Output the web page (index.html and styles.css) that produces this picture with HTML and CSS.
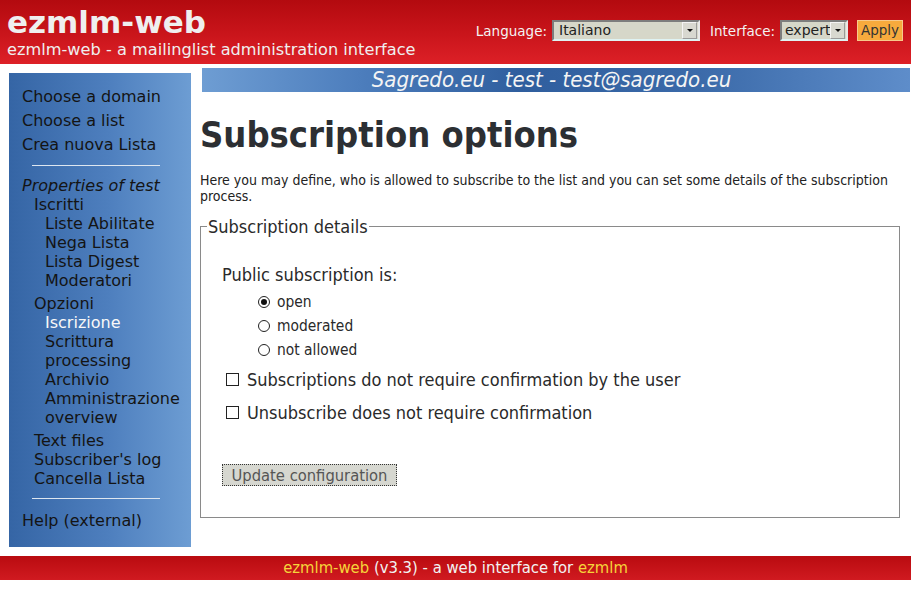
FILE: index.html
```html
<!DOCTYPE html>
<html lang="it">
<head>
<meta charset="utf-8">
<title>ezmlm-web</title>
<link rel="stylesheet" href="styles.css">
</head>
<body>
<header class="top">
  <div class="brand">
    <div class="brand-title">ezmlm-web</div>
    <div class="brand-sub">ezmlm-web - a mailinglist administration interface</div>
  </div>
  <form class="prefs">
    <label class="pref-label">Language:</label>
    <span class="select select-lang"><span class="select-text">Italiano</span><span class="select-arrow"></span></span>
    <label class="pref-label">Interface:</label>
    <span class="select select-iface"><span class="select-text">expert</span><span class="select-arrow"></span></span>
    <button type="button" class="apply">Apply</button>
  </form>
</header>

<div class="layout">
  <nav class="sidebar">
    <ul class="nav-main">
      <li>Choose a domain</li>
      <li>Choose a list</li>
      <li>Crea nuova Lista</li>
    </ul>
    <hr class="sep">
    <div class="props-title">Properties of test</div>
    <ul class="lvl1">
      <li class="group">Iscritti
        <ul class="lvl2">
          <li>Liste Abilitate</li>
          <li>Nega Lista</li>
          <li>Lista Digest</li>
          <li>Moderatori</li>
        </ul>
      </li>
      <li class="group">Opzioni
        <ul class="lvl2">
          <li class="current">Iscrizione</li>
          <li>Scrittura</li>
          <li>processing</li>
          <li>Archivio</li>
          <li>Amministrazione</li>
          <li>overview</li>
        </ul>
      </li>
      <li>Text files</li>
      <li>Subscriber's log</li>
      <li>Cancella Lista</li>
    </ul>
    <hr class="sep sep2">
    <ul class="nav-main">
      <li>Help (external)</li>
    </ul>
  </nav>

  <main class="content">
    <div class="listbar">Sagredo.eu - test - test@sagredo.eu</div>
    <h1 class="page-title">Subscription options</h1>
    <p class="intro">Here you may define, who is allowed to subscribe to the list and you can set some details of the subscription process.</p>

    <fieldset class="details">
      <legend>Subscription details</legend>
      <div class="q">Public subscription is:</div>
      <ul class="radios">
        <li><span class="radio checked"></span>open</li>
        <li><span class="radio"></span>moderated</li>
        <li><span class="radio"></span>not allowed</li>
      </ul>
      <div class="check first"><span class="box"></span>Subscriptions do not require confirmation by the user</div>
      <div class="check"><span class="box"></span>Unsubscribe does not require confirmation</div>
      <button type="button" class="update">Update configuration</button>
    </fieldset>
  </main>
</div>

<footer class="bottom">
  <span class="hl">ezmlm-web</span> (v3.3) - a web interface for <span class="hl">ezmlm</span>
</footer>
</body>
</html>
```

FILE: styles.css
```css
html, body {
  margin: 0;
  padding: 0;
  background: #ffffff;
}
body {
  font-family: "DejaVu Sans", "Liberation Sans", sans-serif;
  color: #222;
  width: 911px;
}

/* header */
.top {
  height: 64px;
  background: linear-gradient(to bottom, #b30a0f 0%, #c8141a 50%, #dd2027 100%);
  display: flex;
  justify-content: space-between;
  align-items: flex-start;
}
.brand {
  padding: 4px 0 0 7px;
  color: #efefef;
}
.brand-title {
  font-weight: bold;
  font-size: 31px;
  line-height: 36px;
}
.brand-sub {
  font-size: 16.2px;
  line-height: 19px;
  margin-top: 0;
}
.prefs {
  display: flex;
  align-items: center;
  margin: 20px 8px 0 0;
  font-size: 14px;
}
.pref-label {
  color: #f3f3f3;
  margin-right: 5px;
  font-size: 13.5px;
}
.select {
  display: flex;
  align-items: center;
  height: 21px;
  box-sizing: border-box;
  background: #d6d7c9;
  border: 2px solid #7d7d7d;
  border-right-color: #e8e8e8;
  border-bottom-color: #dff3f3;
  color: #222;
  margin-right: 10px;
}
.select-lang { width: 148px; }
.select-iface { width: 68px; margin-right: 9px; }
.select-text {
  flex: 1;
  padding-left: 5px;
  font-size: 14px;
  line-height: 17px;
  white-space: nowrap;
  overflow: hidden;
}
.select-iface .select-text { padding-left: 3px; }
.select-arrow {
  width: 13px;
  height: 15px;
  margin-right: 1px;
  background: #d8d8d0;
  border: 1px solid #9a9a9a;
  border-top-color: #f4f4f4;
  border-left-color: #f4f4f4;
  display: flex;
  align-items: center;
  justify-content: center;
}
.select-arrow::after {
  content: "";
  border-left: 3px solid transparent;
  border-right: 3px solid transparent;
  border-top: 3px solid #111;
}
.apply {
  height: 21px;
  width: 46px;
  padding: 0;
  background: #f7aa3d;
  border: 1px solid #f8c98a;
  color: #333;
  font-family: "DejaVu Sans", sans-serif;
  font-size: 13.5px;
  line-height: 17px;
}

/* layout */
.layout {
  display: flex;
  align-items: flex-start;
}

/* sidebar */
.sidebar {
  width: 182px;
  box-sizing: border-box;
  margin: 9px 0 0 9px;
  padding: 12px 0 14px 13px;
  background: linear-gradient(to right, #3565a5 0%, #4e7fbe 55%, #6d9dd3 100%);
  font-size: 16px;
  color: #141414;
}
.sidebar ul {
  list-style: none;
  margin: 0;
  padding: 0;
}
.nav-main li {
  line-height: 24px;
}
.sep {
  border: 0;
  height: 1px;
  background: #dde6f0;
  width: 128px;
  margin: 8px 0 10px 10px;
}
.sep2 {
  margin: 10px 0 10px 10px;
}
.props-title {
  font-style: italic;
  line-height: 19px;
}
.lvl1 {
  padding-left: 12px !important;
}
.lvl1 li {
  line-height: 19px;
}
.lvl1 > li.group {
  margin-bottom: 4px;
}
.lvl2 {
  padding-left: 11px !important;
}
.lvl2 li.current {
  color: #f8f8f8;
}

/* main */
.content {
  flex: 1;
  margin-left: 9px;
  margin-top: 4px;
  font-family: "DejaVu Sans Condensed", "DejaVu Sans", sans-serif;
  font-stretch: condensed;
}
.listbar {
  margin: 0 1px 0 2px;
  padding-right: 9px;
  height: 24px;
  line-height: 24px;
  text-align: center;
  color: #f4f4f4;
  font-style: italic;
  font-size: 22px;
  background: linear-gradient(to right, #6e9dd3 0%, #4d7ebd 22%, #2f5e9e 45%, #3b6aa9 70%, #5e8dca 100%);
}
.page-title {
  margin: 22px 0 0 0;
  font-size: 36px;
  line-height: 42px;
  font-weight: bold;
  color: #2c2f33;
}
.intro {
  margin: 16px 0 0 0;
  font-size: 14px;
  line-height: 16px;
  color: #222;
}
.details {
  margin: 12px 11px 0 0;
  border: 1px solid #8a8a8a;
  padding: 8px 0 31px 21px;
  color: #2a2a2a;
}
.details legend {
  font-size: 18px;
  padding: 0 1px;
  margin-left: -15px;
  line-height: 21px;
}
.q {
  font-size: 18px;
  line-height: 22px;
  margin-top: 19px;
}
.radios {
  list-style: none;
  margin: 4px 0 0 0;
  padding: 0 0 0 36px;
  font-size: 15.4px;
}
.radios li {
  display: flex;
  align-items: center;
  height: 24px;
}
.radio {
  width: 12px;
  height: 12px;
  border: 1px solid #222;
  border-radius: 50%;
  box-sizing: border-box;
  margin-right: 7px;
  display: flex;
  align-items: center;
  justify-content: center;
}
.radio.checked::after {
  content: "";
  width: 6px;
  height: 6px;
  border-radius: 50%;
  background: #111;
}
.check {
  display: flex;
  align-items: center;
  font-size: 18px;
  height: 33px;
  padding-left: 4px;
}
.check.first { margin-top: 1px; }
.box {
  width: 13px;
  height: 13px;
  box-sizing: border-box;
  border: 1px solid #222;
  margin-right: 8px;
}
.update {
  display: block;
  margin-top: 35px;
  width: 175px;
  height: 22px;
  padding: 0;
  background: #d6d7d0;
  border: 1px dotted #333;
  color: #555;
  font-family: "DejaVu Sans Condensed", "DejaVu Sans", sans-serif;
  font-stretch: condensed;
  font-size: 16.4px;
}

/* footer */
.bottom {
  margin-top: 9px;
  height: 24px;
  line-height: 24px;
  text-align: center;
  background: linear-gradient(to bottom, #b90b10, #d01a20);
  color: #f2f2f2;
  font-family: "DejaVu Sans Condensed", "DejaVu Sans", sans-serif;
  font-stretch: condensed;
  font-size: 16.5px;
}
.hl {
  color: #f6d43a;
}
```
